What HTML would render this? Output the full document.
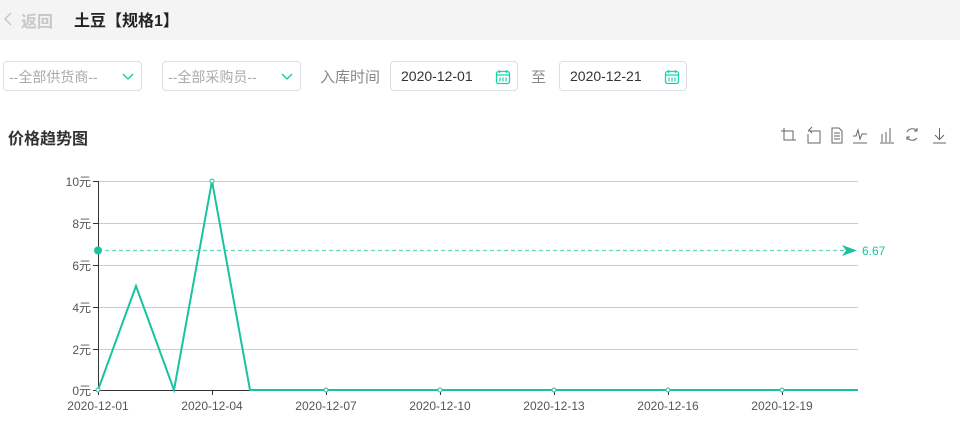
<!DOCTYPE html>
<html><head><meta charset="utf-8"><style>
body{margin:0;width:960px;height:431px;background:#fff;font-family:"Liberation Sans","Noto Sans CJK SC",sans-serif;position:relative;overflow:hidden}
.hdr{position:absolute;left:0;top:0;width:960px;height:40px;background:#f4f4f4}
.abs{position:absolute;white-space:nowrap}
.box{position:absolute;border:1px solid #dcdfe6;border-radius:4px;box-sizing:border-box;height:30px;top:61px}
.cal{position:absolute;right:6px;top:7px}
</style></head><body>
<div class="hdr"></div>
<svg class="abs" style="left:3px;top:12px" width="10" height="14"><path d="M8 1L2 7l6 6" stroke="#c8c8c8" stroke-width="1.5" fill="none"/></svg>
<div class="abs" style="left:21px;top:8px;font-size:16px;color:#c8c8c8;font-weight:bold">返回</div>
<div class="abs" style="left:74px;top:7px;font-size:16px;color:#222;font-weight:bold">土豆【规格1】</div>

<div class="box" style="left:3px;width:139px"><span class="abs" style="left:5px;top:5px;font-size:14px;color:#aaa">--全部供货商--</span>
<svg class="abs" style="left:118px;top:11px" width="12" height="8"><path d="M1 1l5 5 5-5" stroke="#19c3a0" stroke-width="1.3" fill="none"/></svg></div>
<div class="box" style="left:162px;width:139px"><span class="abs" style="left:5px;top:5px;font-size:14px;color:#aaa">--全部采购员--</span>
<svg class="abs" style="left:118px;top:11px" width="12" height="8"><path d="M1 1l5 5 5-5" stroke="#19c3a0" stroke-width="1.3" fill="none"/></svg></div>
<div class="abs" style="left:320px;top:66px;font-size:15px;color:#888">入库时间</div>
<div class="box" style="left:390px;width:128px"><span class="abs" style="left:10px;top:6px;font-size:14px;color:#333">2020-12-01</span>
<svg class="cal" width="16" height="16"><rect x="1.5" y="2.5" width="13" height="12" rx="2" stroke="#19d3b0" fill="none" stroke-width="1.3"/><path d="M4.5 1v3M11.5 1v3M1.5 6h13M5 8.5v4M8 8.5v4M11 8.5v4" stroke="#19d3b0" stroke-width="1.2"/></svg></div>
<div class="abs" style="left:531px;top:66px;font-size:15px;color:#888">至</div>
<div class="box" style="left:559px;width:128px"><span class="abs" style="left:10px;top:6px;font-size:14px;color:#333">2020-12-21</span>
<svg class="cal" width="16" height="16"><rect x="1.5" y="2.5" width="13" height="12" rx="2" stroke="#19d3b0" fill="none" stroke-width="1.3"/><path d="M4.5 1v3M11.5 1v3M1.5 6h13M5 8.5v4M8 8.5v4M11 8.5v4" stroke="#19d3b0" stroke-width="1.2"/></svg></div>

<div class="abs" style="left:8px;top:125px;font-size:16px;color:#333;font-weight:bold">价格趋势图</div>

<svg class="abs" style="left:0;top:0" width="960" height="431" font-family="Liberation Sans,Noto Sans CJK SC,sans-serif">
<g stroke="#666" fill="none" stroke-width="1">
<path d="M784 128v12h12M781 131h12v9"/>
<path d="M808 131h12v12h-12v-9M812 127l-3 3 3 3"/>
<path d="M832 128h7l3 3v12h-10zM834 133h6M834 136h6M834 139h6"/>
<path d="M853 143h14M853 136h3l2-6 2 9 2-5h5"/>
<path d="M880 143h14M882 134v8M886 132v10M890 128v14"/>
<path d="M917 131a6 6 0 0 0-10 1M907 137a6 6 0 0 0 10 1M917 128v3h-3M907 140v-3h3"/>
<path d="M933 143h13M939.5 128v11M935 135l4.5 4.5 4.5-4.5"/>
</g>
<g stroke="#ccc" stroke-width="1">
<line x1="98" y1="181.5" x2="858" y2="181.5"/><line x1="98" y1="223.5" x2="858" y2="223.5"/>
<line x1="98" y1="265.5" x2="858" y2="265.5"/><line x1="98" y1="307.5" x2="858" y2="307.5"/>
<line x1="98" y1="349.5" x2="858" y2="349.5"/>
</g>
<g stroke="#333"><line x1="98.5" y1="181" x2="98.5" y2="390"/><line x1="98" y1="390.5" x2="858" y2="390.5"/>
<path d="M93 181.5h5M93 223.5h5M93 265.5h5M93 307.5h5M93 349.5h5M93 390.5h5M98.5 390v5M212.5 390v5M326.5 390v5M440.5 390v5M554.5 390v5M668.5 390v5M782.5 390v5"/></g>
<g font-size="12" fill="#555" text-anchor="end">
<text x="91" y="186">10元</text><text x="91" y="228">8元</text><text x="91" y="270">6元</text><text x="91" y="312">4元</text><text x="91" y="354">2元</text><text x="91" y="395">0元</text></g>
<g font-size="12" fill="#555" text-anchor="middle">
<text x="98" y="410">2020-12-01</text><text x="212" y="410">2020-12-04</text><text x="326" y="410">2020-12-07</text><text x="440" y="410">2020-12-10</text><text x="554" y="410">2020-12-13</text><text x="668" y="410">2020-12-16</text><text x="782" y="410">2020-12-19</text></g>
<line x1="98" y1="250.5" x2="845" y2="250.5" stroke="#5fd9bd" stroke-width="1.3" stroke-dasharray="4,3"/>
<path d="M842 245l15 5.5-15 5.5 4-5.5z" fill="#19c3a0"/>
<circle cx="98" cy="250.5" r="4" fill="#19c3a0"/>
<text x="862" y="255" font-size="12" fill="#19c3a0">6.67</text>
<polyline points="98,390 136,286 174,390 212,181 250,390 858,390" fill="none" stroke="#19c3a0" stroke-width="2"/>
<g fill="#fff" stroke="#19c3a0" stroke-width="1"><circle cx="98" cy="390" r="2"/><circle cx="212" cy="181" r="2"/><circle cx="326" cy="390" r="2"/><circle cx="440" cy="390" r="2"/><circle cx="554" cy="390" r="2"/><circle cx="668" cy="390" r="2"/><circle cx="782" cy="390" r="2"/></g>
</svg>
</body></html>
